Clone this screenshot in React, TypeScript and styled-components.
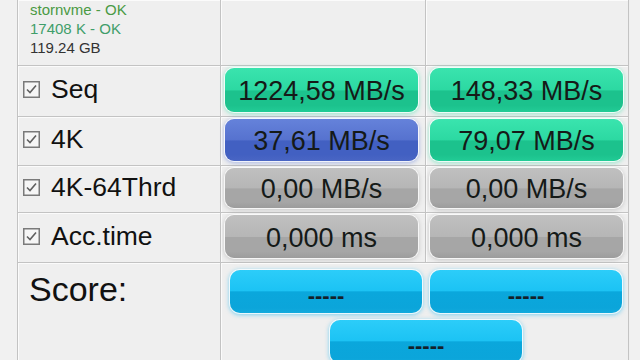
import React from "react";
import styled, { createGlobalStyle, css } from "styled-components";

const Global = createGlobalStyle`
  html, body { margin: 0; padding: 0; background: #f1f1f1; }
  body { width: 640px; height: 360px; overflow: hidden; font-family: "Liberation Sans", Arial, sans-serif; }
`;

const Page = styled.div`
  width: 640px;
  height: 360px;
  background: #f1f1f1;
  overflow: hidden;
`;

const Table = styled.div`
  display: grid;
  grid-template-columns: 203px 205px 203px;
  grid-template-rows: 66px 51px 49px 47px 50px 100px;
  margin-left: 17px;
  width: 612px;
  border-left: 1px solid #c3c3c3;
  background: #efefef;
`;

const Cell = styled.div<{ $span?: number }>`
  box-sizing: border-box;
  border-right: 1px solid #c3c3c3;
  border-bottom: 1px solid #c3c3c3;
  box-shadow: inset 1px 1px 0 #fbfbfb;
  background: #efefef;
  ${(p) => p.$span && css`grid-column: span ${p.$span};`}
`;

const InfoCell = styled(Cell)`
  padding-left: 12px;
  font-size: 15px;
  line-height: 19px;
`;

const InfoLine = styled.div<{ $color: string }>`
  color: ${(p) => p.$color};
  white-space: nowrap;
`;

const LabelCell = styled(Cell)`
  display: flex;
  align-items: center;
  padding: 0 0 3px 5px;
  gap: 11px;
  font-size: 26.5px;
  color: #111;
`;

const BarCell = styled(Cell)`
  padding: 2px 4px 4px 4px;
`;

const palettes = {
  green: { top: "#3ae4ae", mid: "#2cd9a2", low: "#1cc28d", bot: "#22cc96", glow: "rgba(40,220,160,0.45)" },
  blue: { top: "#6582da", mid: "#5672cf", low: "#4260c2", bot: "#4a66c4", glow: "rgba(80,110,210,0.45)" },
  gray: { top: "#c0c0c0", mid: "#b6b6b6", low: "#a6a6a6", bot: "#9c9c9c", glow: "rgba(150,150,150,0.45)" },
  cyan: { top: "#2cccf8", mid: "#18c0f2", low: "#0aa6da", bot: "#0fa8dc", glow: "rgba(20,180,240,0.5)" },
};

type Tone = keyof typeof palettes;

const Bar = styled.div<{ $tone: Tone }>`
  box-sizing: border-box;
  width: 193px;
  height: 100%;
  border-radius: 9px;
  display: flex;
  align-items: center;
  justify-content: center;
  padding-top: 3px;
  font-size: 27px;
  line-height: 27px;
  color: #151a18;
  white-space: nowrap;
  ${(p) => {
    const c = palettes[p.$tone];
    return css`
      background: linear-gradient(
        to bottom,
        ${c.top} 0%,
        ${c.mid} 50%,
        ${c.low} 52%,
        ${c.low} 85%,
        ${c.bot} 100%
      );
      box-shadow: 0 0 0 1px rgba(255, 255, 255, 0.8), 0 1px 4px 1px ${c.glow};
    `;
  }}
`;

const ScoreLabelCell = styled(Cell)`
  padding: 9px 0 0 11px;
  font-size: 34px;
  line-height: 34px;
  color: #111;
`;

const ScoreCell = styled(Cell)`
  display: grid;
  grid-template-columns: 192px 192px;
  grid-template-rows: 43px 43px;
  column-gap: 8px;
  row-gap: 7px;
  padding: 7px 0 0 9px;
  align-content: start;
`;

const ScoreBar = styled.div<{ $wide?: boolean }>`
  box-sizing: border-box;
  width: 192px;
  height: 43px;
  border-radius: 10px;
  display: flex;
  justify-content: center;
  align-items: flex-start;
  padding-top: 15px;
  font-size: 22px;
  line-height: 22px;
  font-weight: bold;
  letter-spacing: 0;
  color: #142029;
  background: linear-gradient(to bottom, #2ccdf9 0%, #1cc3f4 48%, #0aa7dc 51%, #0ba5da 88%, #12aadd 100%);
  box-shadow: 0 0 0 1px rgba(255, 255, 255, 0.8), 0 1px 4px 1px rgba(20, 180, 240, 0.5);
  ${(p) => p.$wide && css`grid-column: 1 / span 2; justify-self: center;`}
`;

const Check = () => (
  <svg width="17" height="17" viewBox="0 0 17 17">
    <rect x="0.75" y="0.75" width="15.5" height="15.5" fill="#f6f6f6" stroke="#7a7a7a" strokeWidth="1.5" />
    <path d="M4 8.5 L7 11.5 L13 4.5" fill="none" stroke="#606060" strokeWidth="1.6" />
  </svg>
);

type Row = { label: string; read: string; write: string; rt: Tone; wt: Tone };

const rows: Row[] = [
  { label: "Seq", read: "1224,58 MB/s", write: "148,33 MB/s", rt: "green", wt: "green" },
  { label: "4K", read: "37,61 MB/s", write: "79,07 MB/s", rt: "blue", wt: "green" },
  { label: "4K-64Thrd", read: "0,00 MB/s", write: "0,00 MB/s", rt: "gray", wt: "gray" },
  { label: "Acc.time", read: "0,000 ms", write: "0,000 ms", rt: "gray", wt: "gray" },
];

export default function App() {
  return (
    <Page>
      <Global />
      <Table>
        <InfoCell>
          <InfoLine $color="#4a9a44">stornvme - OK</InfoLine>
          <InfoLine $color="#3f9e6a">17408 K - OK</InfoLine>
          <InfoLine $color="#333">119.24 GB</InfoLine>
        </InfoCell>
        <Cell />
        <Cell />
        {rows.map((r) => (
          <React.Fragment key={r.label}>
            <LabelCell>
              <Check />
              <span>{r.label}</span>
            </LabelCell>
            <BarCell>
              <Bar $tone={r.rt}>{r.read}</Bar>
            </BarCell>
            <BarCell>
              <Bar $tone={r.wt}>{r.write}</Bar>
            </BarCell>
          </React.Fragment>
        ))}
        <ScoreLabelCell>Score:</ScoreLabelCell>
        <ScoreCell $span={2}>
          <ScoreBar>-----</ScoreBar>
          <ScoreBar>-----</ScoreBar>
          <ScoreBar $wide>-----</ScoreBar>
        </ScoreCell>
      </Table>
    </Page>
  );
}
